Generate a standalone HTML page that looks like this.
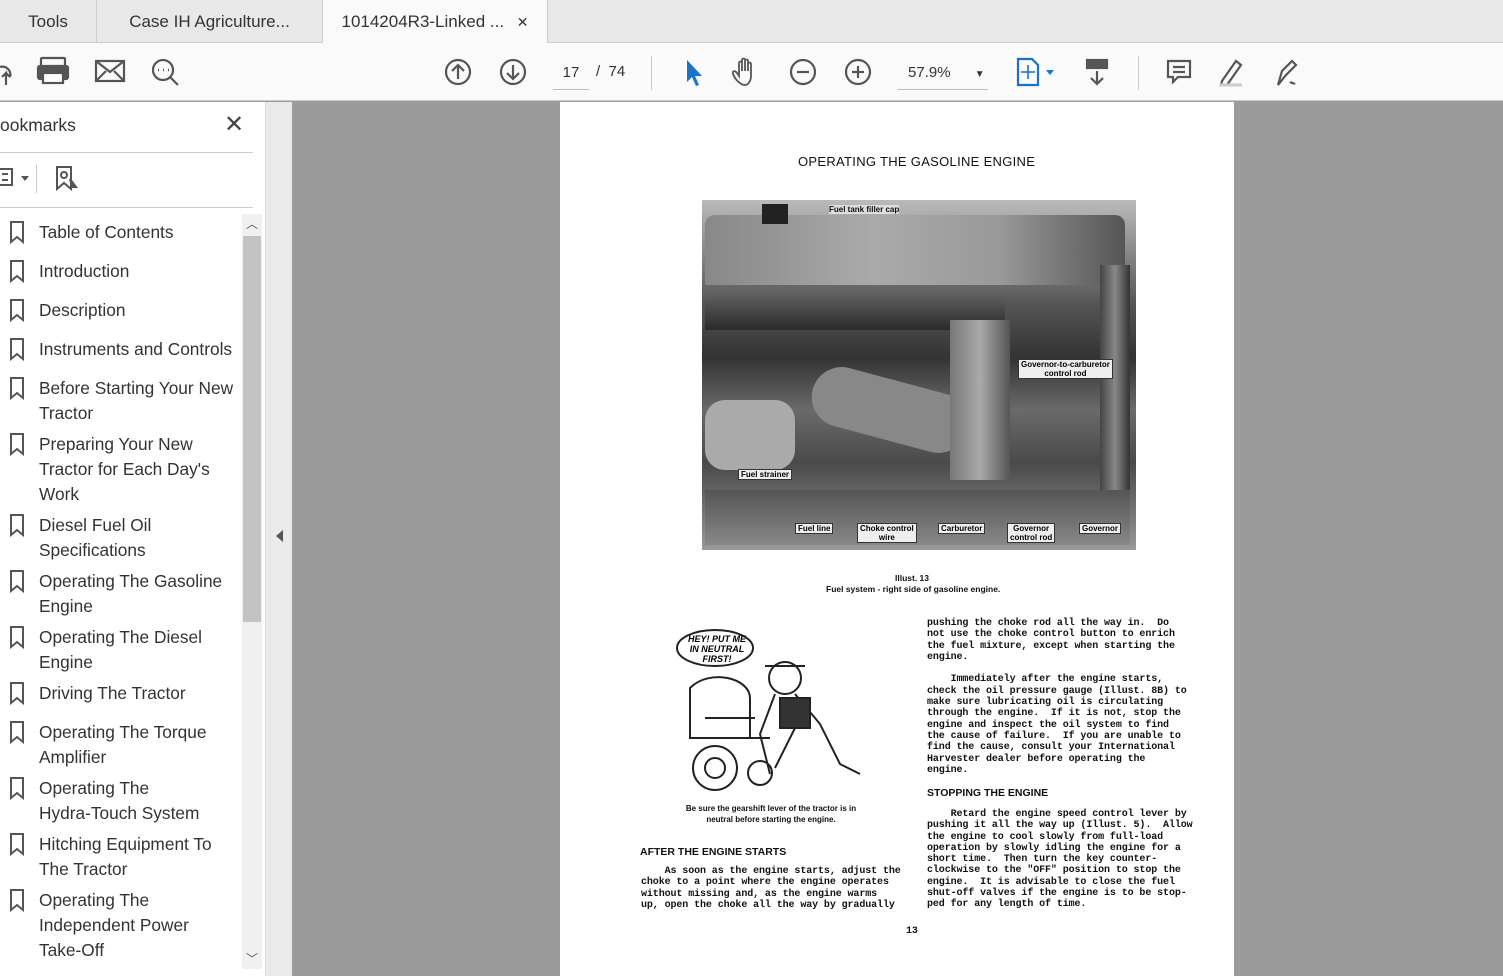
<!DOCTYPE html><html><head><style>
*{margin:0;padding:0;box-sizing:border-box}
body{width:1503px;height:976px;overflow:hidden;background:#9b9b9b;font-family:"Liberation Sans",sans-serif;position:relative}
.a{position:absolute}
.tabs{left:0;top:0;width:1503px;height:43px;background:#e8e8e8;border-bottom:1px solid #ccc}
.tab{top:0;height:43px;font-size:17px;color:#333;line-height:43px;text-align:center;border-right:1px solid #ccc}
.tb{left:0;top:43px;width:1503px;height:58px;background:#fafafa;border-bottom:1px solid #ccc}
.side{left:0;top:102px;width:265px;height:874px;background:#fff}
.strip{left:265px;top:102px;width:27px;height:874px;background:#eaeaea;border-left:1px solid #ddd}
.bm{left:39px;font-size:17.3px;color:#333;line-height:25px}
.page{left:560px;top:102px;width:674px;height:874px;background:#fff}
.t{font-family:"Liberation Mono",monospace;font-size:10px;line-height:11.3px;color:#111;white-space:pre;font-weight:bold;letter-spacing:-.1px}
.h{font-size:11px;font-weight:bold;color:#111}
.lbl{font-size:8px;background:#eee;color:#000;padding:0 2px;border:1px solid #333;font-weight:bold}
svg{position:absolute}
</style></head><body>
<div class="a tabs"></div>
<div class="a tab" style="left:0;width:97px">Tools</div>
<div class="a tab" style="left:97px;width:226px">Case IH Agriculture...</div>
<div class="a tab" style="left:323px;width:225px;background:#fafafa;height:44px">1014204R3-Linked ... <span style="font-size:14px;margin-left:8px">✕</span></div>
<div class="a tb"></div>
<svg style="left:0;top:55px" width="200" height="35" fill="none" stroke="#555" stroke-width="2.2">
<path d="M0 12a8 8 0 0 1 10 10M6 30V18l-4 4M6 18l4 4"/>
<rect x="41" y="3" width="24" height="9" rx="1"/><rect x="38" y="11" width="30" height="13" rx="2" fill="#555"/><rect x="43" y="18" width="20" height="10" fill="#fff"/>
<rect x="96" y="6" width="28" height="20"/><path d="M96 6l14 11 14-11M96 26l10-10M124 26l-10-10"/>
<circle cx="163" cy="15" r="10"/><path d="M170 22l8 8"/><path d="M158 15h1M163 15h1M168 15h1" stroke-width="2.5"/>
</svg>
<svg style="left:440px;top:55px" width="870" height="35" fill="none" stroke="#555" stroke-width="2.2">
<circle cx="18" cy="17" r="12"/><path d="M18 24V10M12 16l6-6 6 6"/>
<circle cx="73" cy="17" r="12"/><path d="M73 10v14M67 18l6 6 6-6"/>
<path d="M247 5l0 22 5-5 4 9 3-1-4-9 7 0z" fill="#1a73c9" stroke="none"/>
<path d="M305 30c-5 0-10-6-12-11-1-3 2-4 4-1l2 3V8c0-2 3-2 3 0v8V5c0-2 3-2 3 0v11V6c0-2 3-2 3 0v10V9c0-2 3-2 3 0v12c0 5-3 9-6 9z" stroke-width="1.8"/>
<circle cx="363" cy="17" r="12"/><path d="M357 17h12"/>
<circle cx="418" cy="17" r="12"/><path d="M412 17h12M418 11v12"/>
<path d="M578 4h14l6 6v20h-20z" stroke="#1a73c9"/><path d="M588 10v14M581 17h14" stroke="#1a73c9" stroke-width="1.6"/>
<path d="M606 15h8l-4 5z" fill="#1a73c9" stroke="none"/>
<rect x="647" y="5" width="20" height="8" fill="#555"/><path d="M657 16v13M651 23l6 6 6-6"/>
<path d="M728 6h22v16h-12l-5 5v-5h-5z"/><path d="M733 12h12M733 17h12"/>
<path d="M782 26l14-20 5 4-14 20h-6z"/><path d="M780 30h22" stroke="#ccc" stroke-width="3"/>
<path d="M838 30l4-14 10-10 4 4-10 10z"/><path d="M850 28c2-2 3 2 5 0"/>
</svg>
<div class="a" style="left:553px;top:60px;width:36px;height:30px;border-bottom:1px solid #bbb;font-size:15px;color:#333;text-align:center;line-height:26px">17</div>
<div class="a" style="left:596px;top:63px;font-size:15px;color:#333">/ &nbsp;74</div>
<div class="a" style="left:651px;top:56px;width:1px;height:34px;background:#ccc"></div>
<div class="a" style="left:1138px;top:56px;width:1px;height:34px;background:#ccc"></div>
<div class="a" style="left:898px;top:60px;width:90px;height:30px;border-bottom:1px solid #bbb;font-size:15px;color:#333;line-height:26px;padding-left:10px">57.9% <span style="font-size:10px;margin-left:20px">▼</span></div>

<div class="a side"></div>
<div class="a" style="left:0;top:115px;font-size:17.5px;color:#333">ookmarks</div>
<div class="a" style="left:224px;top:110px;font-size:24px;color:#444">✕</div>
<div class="a" style="left:0;top:152px;width:253px;height:1px;background:#ccc"></div>
<svg style="left:0;top:163px" width="90" height="30" fill="none" stroke="#555" stroke-width="2"><rect x="-2" y="6" width="14" height="16"/><path d="M2 11h6M2 17h6"/><path d="M21 13h8l-4 5z" fill="#555" stroke="none"/><path d="M57 4h14v22l-7-6-7 6z"/><circle cx="64" cy="12" r="3"/><path d="M70 16l6 8-4 0z" fill="#555"/></svg>
<div class="a" style="left:36px;top:165px;width:1px;height:28px;background:#ccc"></div>
<div class="a" style="left:0;top:207px;width:253px;height:1px;background:#ccc"></div>
<div class="a" style="left:242px;top:214px;width:20px;height:755px;background:#f0f0f0"></div>
<div class="a" style="left:243px;top:236px;width:18px;height:386px;background:#c2c2c2"></div>
<div class="a" style="left:246px;top:215px;font-size:12px;color:#555">︿</div>
<div class="a" style="left:246px;top:950px;font-size:12px;color:#555">﹀</div>
<div class="a bm" style="top:220px">Table of Contents</div>
<div class="a bm" style="top:259px">Introduction</div>
<div class="a bm" style="top:298px">Description</div>
<div class="a bm" style="top:337px">Instruments and Controls</div>
<div class="a bm" style="top:376px">Before Starting Your New<br>Tractor</div>
<div class="a bm" style="top:432px">Preparing Your New<br>Tractor for Each Day's<br>Work</div>
<div class="a bm" style="top:513px">Diesel Fuel Oil<br>Specifications</div>
<div class="a bm" style="top:569px">Operating The Gasoline<br>Engine</div>
<div class="a bm" style="top:625px">Operating The Diesel<br>Engine</div>
<div class="a bm" style="top:681px">Driving The Tractor</div>
<div class="a bm" style="top:720px">Operating The Torque<br>Amplifier</div>
<div class="a bm" style="top:776px">Operating The<br>Hydra-Touch System</div>
<div class="a bm" style="top:832px">Hitching Equipment To<br>The Tractor</div>
<div class="a bm" style="top:888px">Operating The<br>Independent Power<br>Take-Off</div>
<svg style="left:8px;top:220px" width="20" height="740" fill="none" stroke="#555" stroke-width="2">
<g id="b"><path d="M3 2h12v20l-6-5-6 5z"/></g>
<use href="#b" y="39"/><use href="#b" y="78"/><use href="#b" y="117"/><use href="#b" y="156"/><use href="#b" y="212"/><use href="#b" y="293"/><use href="#b" y="349"/><use href="#b" y="405"/><use href="#b" y="461"/><use href="#b" y="500"/><use href="#b" y="556"/><use href="#b" y="612"/><use href="#b" y="668"/>
</svg>
<div class="a strip"></div>
<div class="a" style="left:276px;top:530px;width:0;height:0;border-top:6px solid transparent;border-bottom:6px solid transparent;border-right:7px solid #555"></div>

<div class="a page"></div>
<div class="a h" style="left:798px;top:154px;font-size:13px;font-weight:normal;letter-spacing:.3px">OPERATING THE GASOLINE ENGINE</div>
<div class="a" style="left:702px;top:200px;width:434px;height:350px;background:linear-gradient(180deg,#bbb 0%,#999 10%,#555 30%,#333 45%,#6a6a6a 60%,#4a4a4a 75%,#777 90%,#999 100%)"></div>
<div class="a" style="left:705px;top:215px;width:420px;height:70px;background:linear-gradient(90deg,#888,#aaa 40%,#999 70%,#555);border-radius:10px 10px 0 0"></div>
<div class="a" style="left:705px;top:290px;width:300px;height:40px;background:linear-gradient(180deg,#666,#2a2a2a)"></div>
<div class="a" style="left:705px;top:400px;width:90px;height:70px;background:#aaa;border-radius:20px"></div>
<div class="a" style="left:810px;top:380px;width:160px;height:60px;background:#888;border-radius:30px;transform:rotate(15deg)"></div>
<div class="a" style="left:950px;top:320px;width:60px;height:160px;background:linear-gradient(90deg,#777,#aaa,#555)"></div>
<div class="a" style="left:1100px;top:265px;width:30px;height:280px;background:linear-gradient(90deg,#444,#888,#333)"></div>
<div class="a" style="left:705px;top:490px;width:425px;height:55px;background:linear-gradient(180deg,#555,#888)"></div>
<div class="a" style="left:762px;top:204px;width:26px;height:20px;background:#222"></div>
<div class="a h" style="left:829px;top:205px;font-size:8px;background:#ddd">Fuel tank filler cap</div>
<div class="a lbl" style="left:1018px;top:359px;text-align:center">Governor-to-carburetor<br>control rod</div>
<div class="a lbl" style="left:738px;top:469px">Fuel strainer</div>
<div class="a lbl" style="left:795px;top:523px">Fuel line</div>
<div class="a lbl" style="left:857px;top:523px;text-align:center">Choke control<br>wire</div>
<div class="a lbl" style="left:938px;top:523px">Carburetor</div>
<div class="a lbl" style="left:1007px;top:523px;text-align:center">Governor<br>control rod</div>
<div class="a lbl" style="left:1079px;top:523px">Governor</div>
<div class="a h" style="left:895px;top:573px;font-size:8.5px">Illust. 13</div>
<div class="a h" style="left:826px;top:584px;font-size:8.5px">Fuel system - right side of gasoline engine.</div>
<svg style="left:675px;top:628px" width="195" height="170" fill="none" stroke="#222" stroke-width="2">
<ellipse cx="40" cy="20" rx="38" ry="18"/><circle cx="40" cy="140" r="22"/><circle cx="40" cy="140" r="10"/><circle cx="85" cy="145" r="12"/>
<path d="M15 60c20-20 60-10 60 10v40H15z M25 110h70 M30 90h50"/>
<circle cx="110" cy="50" r="16"/><path d="M90 38h40 M100 66l-15 40 10 40 M120 66l25 30 20 40 20 10 M120 100l-20 40"/>
<path d="M105 70h30v30h-30z" fill="#333"/>
</svg>
<div class="a" style="left:682px;top:634px;font-size:9px;font-style:italic;font-weight:bold;line-height:10px;text-align:center;width:70px">HEY! PUT ME<br>IN NEUTRAL<br>FIRST!</div>
<div class="a h" style="left:676px;top:803px;font-size:8px;text-align:center;width:190px;line-height:11px">Be sure the gearshift lever of the tractor is in<br>neutral before starting the engine.</div>
<div class="a h" style="left:640px;top:846px;font-size:10.5px">AFTER THE ENGINE STARTS</div>
<div class="a t" style="left:641px;top:866px">    As soon as the engine starts, adjust the
choke to a point where the engine operates
without missing and, as the engine warms
up, open the choke all the way by gradually</div>
<div class="a t" style="left:927px;top:618px">pushing the choke rod all the way in.  Do
not use the choke control button to enrich
the fuel mixture, except when starting the
engine.

    Immediately after the engine starts,
check the oil pressure gauge (Illust. 8B) to
make sure lubricating oil is circulating
through the engine.  If it is not, stop the
engine and inspect the oil system to find
the cause of failure.  If you are unable to
find the cause, consult your International
Harvester dealer before operating the
engine.</div>
<div class="a h" style="left:927px;top:787px;font-size:10.5px">STOPPING THE ENGINE</div>
<div class="a t" style="left:927px;top:809px">    Retard the engine speed control lever by
pushing it all the way up (Illust. 5).  Allow
the engine to cool slowly from full-load
operation by slowly idling the engine for a
short time.  Then turn the key counter-
clockwise to the "OFF" position to stop the
engine.  It is advisable to close the fuel
shut-off valves if the engine is to be stop-
ped for any length of time.</div>
<div class="a t" style="left:906px;top:926px">13</div>
</body></html>
